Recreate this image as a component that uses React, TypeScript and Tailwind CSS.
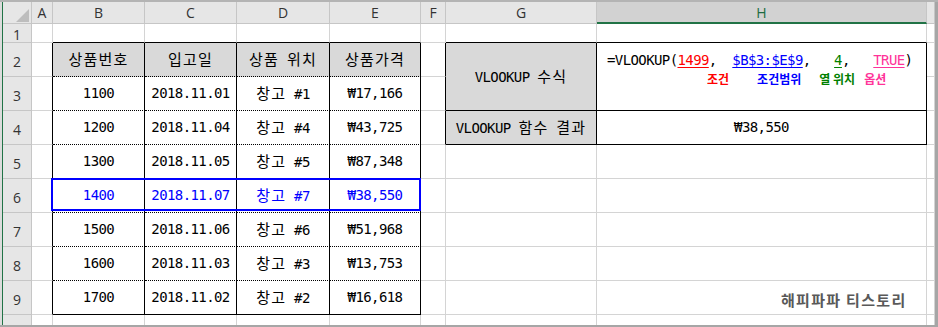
import React from "react";

/* ---------- Styles ---------- */

const MONO = "font-['DejaVu_Sans_Mono','Noto_Sans_CJK_KR',monospace] text-[14px] tracking-[-0.6px]";
const HDR = "font-['Open_Sans','Liberation_Sans',sans-serif] text-[14px] text-[#333]";

const R_GRID = "border-r border-r-[#d4d4d4]";
const R_BLACK = "border-r border-r-black";
const B_GRID = "border-b border-b-[#d4d4d4]";
const B_BLACK = "border-b border-b-black";
const B_DOT = "border-b border-b-black [border-bottom-style:dotted]";

const HANGUL = /([\uAC00-\uD7A3]+)/;

/* ---------- Data ---------- */

const columns = ["A", "B", "C", "D", "E", "F", "G", "H", ""];
const headers = ["상품번호", "입고일", "상품 위치", "상품가격"];
const items = [
  ["1100", "2018.11.01", "창고 #1", "₩17,166"],
  ["1200", "2018.11.04", "창고 #4", "₩43,725"],
  ["1300", "2018.11.05", "창고 #5", "₩87,348"],
  ["1400", "2018.11.07", "창고 #7", "₩38,550"],
  ["1500", "2018.11.06", "창고 #6", "₩51,968"],
  ["1600", "2018.11.03", "창고 #3", "₩13,753"],
  ["1700", "2018.11.02", "창고 #2", "₩16,618"],
];

/* ---------- Helpers ---------- */

// Gulim-like look: half-width ascii in mono, hangul full width
function Txt({ s }: { s: string }) {
  return (
    <span className={`whitespace-pre ${MONO}`}>
      {s.split(HANGUL).map((part, i) =>
        HANGUL.test(part) ? (
          <span key={i} className="font-['Noto_Sans_CJK_KR'] text-[15px] tracking-[1.2px]">
            {part}
          </span>
        ) : (
          part
        )
      )}
    </span>
  );
}

function Cell({ className = "", children }: { className?: string; children?: React.ReactNode }) {
  return (
    <div className={`box-border flex items-center justify-center overflow-hidden ${className}`}>
      {children}
    </div>
  );
}

function RowHead({ n }: { n: number }) {
  return (
    <Cell className={`bg-[#e6e6e6] border-r border-b border-[#c6c6c6] pt-[3px] ${HDR}`}>{n}</Cell>
  );
}

/* ---------- Component ---------- */

export default function App() {
  return (
    <div className="w-[938px] h-[327px] bg-white flex flex-col overflow-hidden">
      <div className="h-[2px] bg-[#b4b4b4]" />
      <div className="flex flex-1 min-h-0">
        <div className="w-[2px] bg-[#dcdcdc]" />
        <div className="w-px bg-[#217346]" />

        <div className="relative grid grid-cols-[29px_21px_92px_92px_93px_91px_25px_151px_330px_8px] grid-rows-[22px_19px_repeat(8,34px)_10px]">
          {/* column headers */}
          <Cell className="bg-[#e6e6e6] border-r border-b border-[#c6c6c6] !items-end !justify-end pr-[2px] pb-px">
            <svg width="13" height="13" viewBox="0 0 13 13">
              <polygon points="13,0 13,13 0,13" fill="#bdbdbd" />
            </svg>
          </Cell>
          {columns.map((c) =>
            c === "H" ? (
              <Cell key={c} className={`bg-[#d2d2d2] border-r border-r-[#c6c6c6] border-b-2 border-b-[#217346] font-['Open_Sans','Liberation_Sans',sans-serif] text-[14px] text-[#1e6b42]`}>
                {c}
              </Cell>
            ) : (
              <Cell key={c || "i"} className={`bg-[#e6e6e6] border-r border-b border-[#c6c6c6] ${HDR}`}>
                {c}
              </Cell>
            )
          )}

          {/* row 1 */}
          <RowHead n={1} />
          <Cell className={`${R_GRID} ${B_GRID}`} />
          {headers.map((h) => (
            <Cell key={h} className={`${R_GRID} ${B_BLACK}`} />
          ))}
          <Cell className={`${R_GRID} ${B_GRID}`} />
          <Cell className={`${R_GRID} ${B_BLACK}`} />
          <Cell className={`${R_GRID} ${B_BLACK}`} />
          <Cell className={`${R_GRID} ${B_GRID}`} />

          {/* row 2 */}
          <RowHead n={2} />
          <Cell className={`${R_BLACK} ${B_GRID}`} />
          {headers.map((h) => (
            <Cell key={h} className={`bg-[#d9d9d9] text-black ${R_BLACK} ${B_DOT}`}>
              <Txt s={h} />
            </Cell>
          ))}
          <Cell className={`${R_BLACK} ${B_GRID}`} />
          <Cell className={`row-span-2 bg-[#d9d9d9] text-black ${R_BLACK} ${B_BLACK}`}>
            <Txt s="VLOOKUP 수식" />
          </Cell>
          <Cell className={`row-span-2 !items-start !justify-start flex-col pl-[10px] pt-[8px] text-black ${R_BLACK} ${B_BLACK}`}>
            <div className={`leading-[19px] whitespace-pre ${MONO}`}>
              {"=VLOOKUP("}
              <span className="text-[#ff0000] underline underline-offset-2 decoration-[#ff0000]">1499</span>
              {",  "}
              <span className="text-[#0000ff] underline underline-offset-2 decoration-[#0000ff]">$B$3:$E$9</span>
              {",   "}
              <span className="text-[#008000] underline underline-offset-2 decoration-[#008000]">4</span>
              {",   "}
              <span className="text-[#ff3399] underline underline-offset-2 decoration-[#ff3399]">TRUE</span>
              {")"}
            </div>
            <div className="flex font-['Noto_Sans_CJK_KR'] font-bold text-[12px] leading-[17px] whitespace-pre">
              <span className="ml-[100px] text-[#ff0000]">조건</span>
              <span className="ml-[28px] text-[#0000ff]">조건범위</span>
              <span className="ml-[18px] text-[#008000]">열 위치</span>
              <span className="ml-[9px] text-[#ff3399]">옵션</span>
            </div>
          </Cell>
          <Cell className={`${R_GRID} ${B_GRID}`} />

          {/* rows 3 - 9 */}
          {items.map((row, i) => {
            const r = i + 3;
            const color = r === 6 ? "text-[#0000ff]" : "text-black";
            const bottom = r === 9 ? B_BLACK : B_DOT;
            return (
              <React.Fragment key={r}>
                <RowHead n={r} />
                <Cell className={`${R_BLACK} ${B_GRID}`} />
                {row.map((v, j) => (
                  <Cell key={j} className={`${color} ${R_BLACK} ${bottom}`}>
                    <Txt s={v} />
                  </Cell>
                ))}
                <Cell className={`${r === 3 || r === 4 ? R_BLACK : R_GRID} ${B_GRID}`} />
                {r === 4 && (
                  <>
                    <Cell className={`bg-[#d9d9d9] text-black ${R_BLACK} ${B_BLACK}`}>
                      <Txt s="VLOOKUP 함수 결과" />
                    </Cell>
                    <Cell className={`text-black ${R_BLACK} ${B_BLACK}`}>
                      <Txt s="₩38,550" />
                    </Cell>
                  </>
                )}
                {r >= 5 && (
                  <>
                    <Cell className={`${R_GRID} ${B_GRID}`} />
                    <Cell className={`${R_GRID} ${B_GRID}`} />
                  </>
                )}
                <Cell className={`${R_GRID} ${B_GRID}`} />
              </React.Fragment>
            );
          })}

          {/* row 10, cut off by the window edge */}
          <div className="box-border overflow-hidden bg-[#e6e6e6] border-r border-[#c6c6c6]">
            <div className={`h-[34px] flex items-center justify-center pt-[3px] ${HDR}`}>10</div>
          </div>
          {columns.map((c) => (
            <Cell key={c || "i"} className={R_GRID} />
          ))}

          {/* selected row outline */}
          <div className="absolute left-[48px] top-[176px] w-[370px] h-[33px] border-2 border-[#0000ff] pointer-events-none" />

          {/* watermark */}
          <div className="absolute left-[778px] top-[290px] font-['Noto_Sans_CJK_KR'] font-bold text-[15px] tracking-[1.3px] leading-none text-[#595959] whitespace-pre">
            해피파파 티스토리
          </div>
        </div>

        <div className="w-[3px] bg-[#a6a6a6]" />
      </div>
      <div className="h-[2px] bg-[#a6a6a6]" />
    </div>
  );
}
